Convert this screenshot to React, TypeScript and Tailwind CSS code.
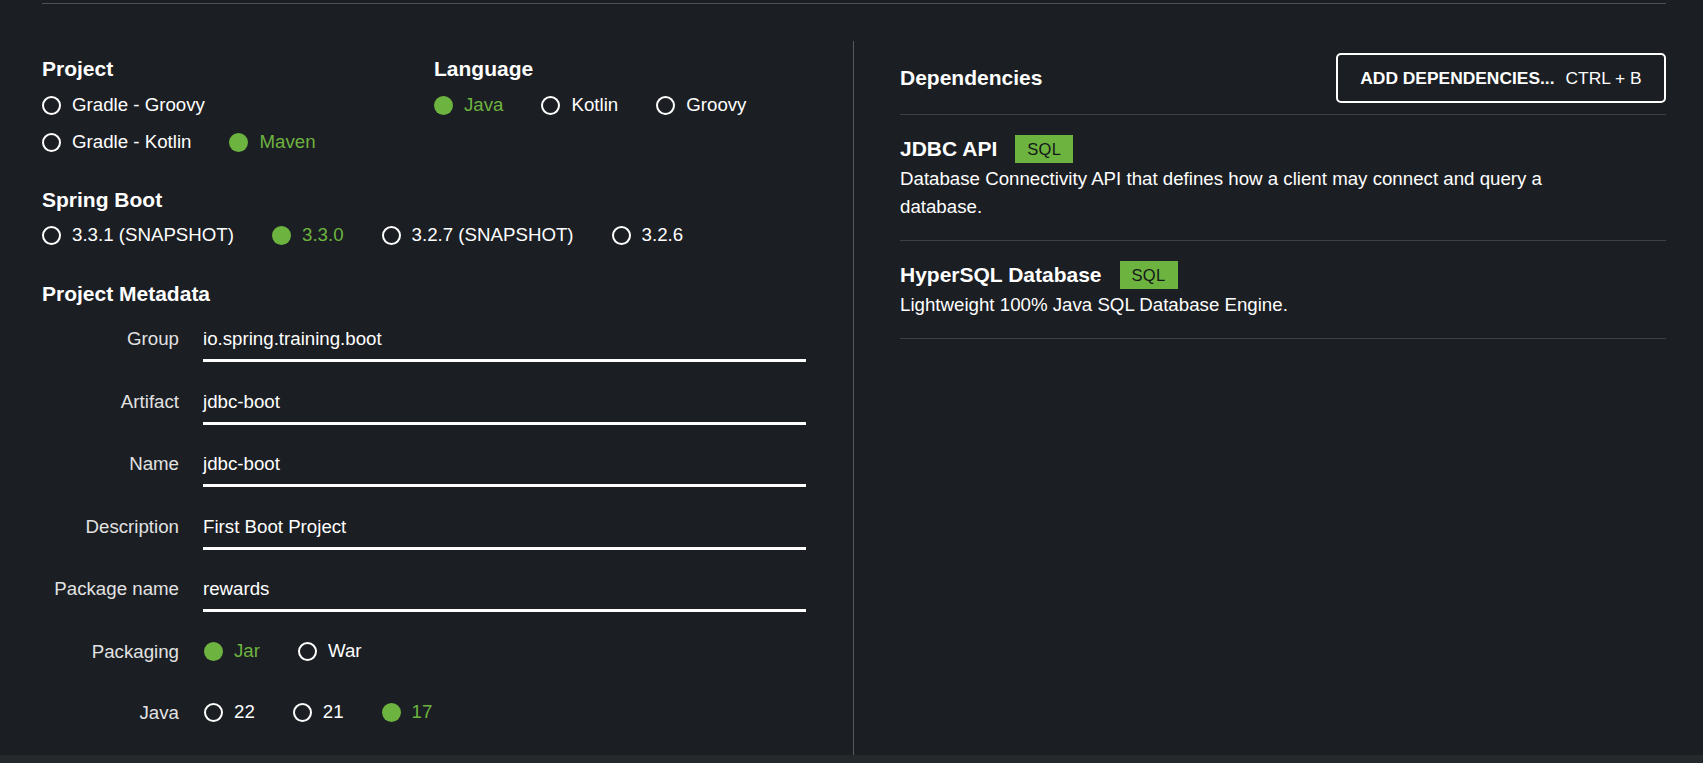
type Option = { label: string; selected?: boolean }

const Radio = ({ label, selected }: Option) => (
  <div className="flex h-[28px] items-center gap-[11px]">
    <span
      className={[
        'box-border h-[19px] w-[19px] shrink-0 rounded-full',
        selected ? 'bg-[#6db33f]' : 'border-2 border-white',
      ].join(' ')}
    />
    <span className={selected ? 'text-[#6db33f]' : 'text-white'}>{label}</span>
  </div>
)

const RadioGroup = ({ options }: { options: Option[] }) => (
  <div className="flex items-center gap-x-[38px]">
    {options.map((o) => (
      <Radio key={o.label} {...o} />
    ))}
  </div>
)

const SectionTitle = ({ children }: { children: string }) => (
  <h2 className="h-[24px] text-[21px] font-bold leading-[24px] text-white">{children}</h2>
)

const Field = ({ label, value }: { label: string; value: string }) => (
  <div className="mb-[25.5px] flex">
    <div className="w-[137px] text-right leading-[28px] text-[#e2e2e2]">{label}</div>
    <div className="ml-[24px] w-[603px]">
      <div className="h-[28px] leading-[28px] text-white">{value}</div>
      <div className="mt-[6px] h-[3px] bg-white" />
    </div>
  </div>
)

const RadioField = ({ label, options }: { label: string; options: Option[] }) => (
  <div className="flex">
    <div className="w-[137px] text-right leading-[28px] text-[#e2e2e2]">{label}</div>
    <div className="ml-[25px]">
      <RadioGroup options={options} />
    </div>
  </div>
)

const Dependency = ({ name, tag, description }: { name: string; tag: string; description: string }) => (
  <div className="border-b border-[#3d4145] pb-[19px] pt-[20px]">
    <div className="flex h-[28px] items-center gap-[18px]">
      <span className="text-[21px] font-bold text-white">{name}</span>
      <span className="flex h-[28px] items-center bg-[#6db33f] px-[12px] text-[16.5px] tracking-[0.02em] text-[#14171a]">
        {tag}
      </span>
    </div>
    <p className="mt-[2px] max-w-[680px] leading-[28px] text-white">{description}</p>
  </div>
)

export default function App() {
  return (
    <div className="flex h-[763px] flex-col overflow-hidden bg-[#1b1e23] font-['Liberation_Sans',Arial,sans-serif] text-[18.7px]">
      <div className="h-[41px] pl-[42px] pr-[37px] pt-[3px]">
        <div className="h-[1px] bg-[#4d5155]" />
      </div>

      <div className="flex flex-1">
        <div className="w-[853px] pl-[42px] pt-[16px]">
          <div className="flex">
            <div className="w-[392px]">
              <SectionTitle>Project</SectionTitle>
              <div className="mt-[5.5px] flex flex-col gap-[9px] py-[4.5px]">
                <RadioGroup options={[{ label: 'Gradle - Groovy' }]} />
                <RadioGroup options={[{ label: 'Gradle - Kotlin' }, { label: 'Maven', selected: true }]} />
              </div>
            </div>
            <div>
              <SectionTitle>Language</SectionTitle>
              <div className="mt-[5.5px] py-[4.5px]">
                <RadioGroup
                  options={[{ label: 'Java', selected: true }, { label: 'Kotlin' }, { label: 'Groovy' }]}
                />
              </div>
            </div>
          </div>

          <div className="mt-[27.5px]">
            <SectionTitle>Spring Boot</SectionTitle>
            <div className="mt-[9px]">
              <RadioGroup
                options={[
                  { label: '3.3.1 (SNAPSHOT)' },
                  { label: '3.3.0', selected: true },
                  { label: '3.2.7 (SNAPSHOT)' },
                  { label: '3.2.6' },
                ]}
              />
            </div>
          </div>

          <div className="mt-[33px]">
            <SectionTitle>Project Metadata</SectionTitle>
            <div className="mt-[19px]">
              <Field label="Group" value="io.spring.training.boot" />
              <Field label="Artifact" value="jdbc-boot" />
              <Field label="Name" value="jdbc-boot" />
              <Field label="Description" value="First Boot Project" />
              <Field label="Package name" value="rewards" />
              <div className="mt-[1px] flex flex-col gap-[33px]">
                <RadioField label="Packaging" options={[{ label: 'Jar', selected: true }, { label: 'War' }]} />
                <RadioField
                  label="Java"
                  options={[{ label: '22' }, { label: '21' }, { label: '17', selected: true }]}
                />
              </div>
            </div>
          </div>
        </div>

        <div className="flex-1 border-l border-[#575b5f] pl-[46px] pr-[37px] pt-[12px]">
          <div className="flex h-[50px] items-center justify-between">
            <h2 className="text-[21px] font-bold text-white">Dependencies</h2>
            <button
              type="button"
              className="flex h-[50px] w-[330px] items-center justify-center gap-[11px] rounded-[5px] border-2 border-white text-[17.4px] text-white"
            >
              <span className="font-bold">ADD DEPENDENCIES...</span>
              <span>CTRL + B</span>
            </button>
          </div>
          <div className="mt-[11px] h-[1px] bg-[#3d4145]" />
          <Dependency
            name="JDBC API"
            tag="SQL"
            description="Database Connectivity API that defines how a client may connect and query a database."
          />
          <Dependency name="HyperSQL Database" tag="SQL" description="Lightweight 100% Java SQL Database Engine." />
        </div>
      </div>

      <div className="h-[8px] bg-[#25292c]" />
    </div>
  )
}
